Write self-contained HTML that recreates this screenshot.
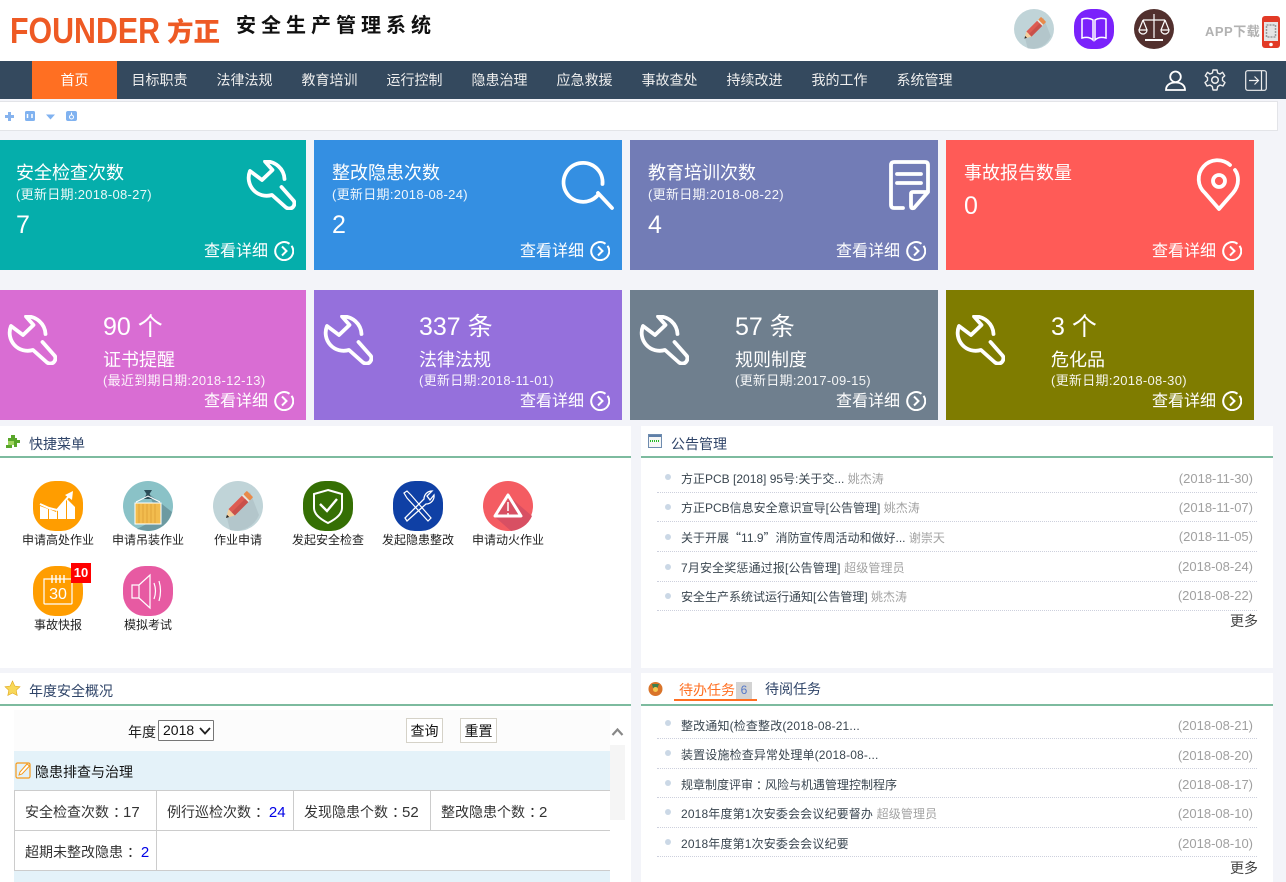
<!DOCTYPE html>
<html lang="zh-CN"><head><meta charset="utf-8"><title>安全生产管理系统</title>
<style>
*{box-sizing:border-box}
html,body{margin:0;padding:0}
body{width:1286px;height:882px;overflow:hidden;background:#f3f4f9;position:relative;font-family:"Liberation Sans","Noto Sans CJK SC",sans-serif;font-size:12px;color:#333}
.a{position:absolute;white-space:nowrap}
svg{position:absolute;display:block;overflow:visible}
.nav{position:absolute;top:61px;left:0;width:1286px;height:38px;background:#34495e}
.nav span{position:absolute;top:0;line-height:38px;font-size:14px;color:#eee;width:85px;text-align:center}
.card{position:absolute;height:130px;color:#fff;overflow:hidden}
.card .a{color:#fff}
.t{font-size:18px;line-height:24px;left:16px;top:21px}
.d{font-size:13px;line-height:16px;left:16px;top:47px;opacity:.92;letter-spacing:.3px}
.n{font-size:25px;line-height:30px;left:16px;top:70px}
.m{font-size:16px;line-height:20px;right:38px;top:102px}
.r2 .n{left:103px;top:22px;font-size:25px}
.r2 .t{left:103px;top:58px}
.r2 .d{left:103px;top:83px}
.ic{fill:none;stroke:#fff;stroke-width:3.8;stroke-linecap:round;stroke-linejoin:round}
.panel{position:absolute;background:#fff}
.ttl{position:absolute;left:0;right:0;top:0;height:32px;border-bottom:2px solid #7dbb9f}
.ttl b{position:absolute;font-weight:400;font-size:14px;color:#2f4468;line-height:20px;top:8px}
.row{position:absolute;left:16px;width:600px;height:1px;border-bottom:1px dotted #cdd0dd}
.li{position:absolute;left:40px;font-size:12px;line-height:16px;color:#3a4650;white-space:nowrap}
.li i{font-style:normal;color:#a3a3a3}
.dg{letter-spacing:.15px}
.dt{position:absolute;right:20px;font-size:13px;line-height:16px;color:#a0a0a0}
.dot{position:absolute;left:24px;width:6px;height:6px;border-radius:50%;background:#cbd8e6}
.more{position:absolute;right:15px;font-size:14px;line-height:18px;color:#444}
.q{position:absolute;width:90px;text-align:center;font-size:12px;line-height:16px;color:#222}
.cell{position:absolute;font-size:14px;line-height:20px;color:#333;white-space:nowrap}
.cell em{font-style:normal;color:#0000e6}
.cell u{text-decoration:none;position:relative;left:4px}
.li u{text-decoration:none;position:relative;left:3px}
.cell s{text-decoration:none;font-size:15px}
.btn{position:absolute;top:718px;width:37px;height:25px;border:1px solid #d5d2c8;background:#fff;font-size:14px;line-height:24px;text-align:center;color:#111}
</style></head><body>
<svg width="0" height="0" style="position:absolute">
<defs>
<symbol id="wr" viewBox="0 0 50 50"><path class="ic" d="M38.500 19A18.500 18.500 0 0 0 19 1.500L26.500 10 16 20 4 11A18 18 0 0 0 26 35L40 47.500Q44 50 47 47 50 43 47 40L35.500 27"/></symbol>
<symbol id="go" viewBox="0 0 20 20"><path d="M15.500 2.800A9 9 0 1 0 17.500 4.800" fill="none" stroke="#fff" stroke-width="2"/><path d="M8 5.500 12.500 10 8 14.500" fill="none" stroke="#fff" stroke-width="2"/></symbol>
<symbol id="pen" viewBox="0 0 50 50"><circle cx="25" cy="25" r="25" fill="#c0d4d8"/><path d="M14 37 37 11 46 34A25 25 0 0 1 17 49Z" fill="#b3c6cb"/><g transform="rotate(45 25 25)"><rect x="20.500" y="8" width="9" height="5" rx="1" fill="#e88a4a"/><rect x="20.500" y="13" width="9" height="2" fill="#e8e4dc"/><rect x="20.500" y="15" width="9" height="19" fill="#dd5c52"/><rect x="25" y="15" width="4.500" height="19" fill="#c9504a"/><path d="M20.500 34H29.500L25 42Z" fill="#f4cf9d"/><path d="M23.400 39H26.600L25 42Z" fill="#222"/></g></symbol>
</defs></svg>

<!-- header -->
<div class="a" style="left:0;top:0;width:1286px;height:61px;background:#fff"></div>
<svg style="left:0;top:0" width="240" height="61"><text x="10" y="43" font-family="Liberation Sans" font-weight="700" font-size="36" fill="#ee5a24" textLength="150" lengthAdjust="spacingAndGlyphs">FOUNDER</text><text x="167" y="41" font-family="Noto Sans CJK SC" font-weight="900" font-size="26" fill="#ee5a24" textLength="53" lengthAdjust="spacingAndGlyphs">方正</text></svg>
<div class="a" style="left:236px;top:12px;font-size:20px;line-height:28px;font-weight:700;letter-spacing:5px;color:#111">安全生产管理系统</div>
<svg style="left:1014px;top:9px" width="40" height="40"><use href="#pen" width="40" height="40"/></svg>
<svg style="left:1074px;top:9px" width="40" height="40" viewBox="0 0 40 40"><rect width="40" height="40" rx="17" fill="#7a22fb"/><path d="M19 11C16 9 11 9 8 10V29C12 28 16 28 19 31ZM21 11C24 9 29 9 32 10V29C28 28 24 28 21 31Z" fill="none" stroke="#fff" stroke-width="1.500"/></svg>
<svg style="left:1134px;top:9px" width="40" height="40" viewBox="0 0 40 40"><circle cx="20" cy="20" r="20" fill="#52302e"/><path d="M20 5V29M9 11H31M9 11 5 21M9 11 13 21M31 11 27 21M31 11 35 21M13 31H27" fill="none" stroke="#fff" stroke-width="1.200"/><path d="M5 21A4 4 0 0 0 13 21ZM27 21A4 4 0 0 0 35 21Z" fill="none" stroke="#fff" stroke-width="1.200"/><rect x="11" y="30" width="18" height="2" fill="#fff"/></svg>
<div class="a" style="left:1205px;top:23px;font-size:13px;line-height:18px;font-weight:700;letter-spacing:.5px;color:#b2b2b2">APP下载</div>
<svg style="left:1262px;top:16px" width="18" height="32" viewBox="0 0 18 32"><rect width="18" height="32" rx="3" fill="#e23a26"/><rect x="2" y="6" width="14" height="19" fill="#e4e4e4"/><rect x="4.500" y="9" width="9" height="12" fill="none" stroke="#999" stroke-width="1.500" stroke-dasharray="2 1"/><circle cx="9" cy="28.500" r="1.800" fill="#fff"/></svg>

<!-- nav -->
<div class="nav">
<span style="left:32px;background:#ff6f22;color:#fff">首页</span>
<span style="left:117px">目标职责</span><span style="left:202px">法律法规</span><span style="left:287px">教育培训</span><span style="left:372px">运行控制</span><span style="left:457px">隐患治理</span><span style="left:542px">应急救援</span><span style="left:627px">事故查处</span><span style="left:712px">持续改进</span><span style="left:797px">我的工作</span><span style="left:882px">系统管理</span>
<svg style="left:1165px;top:9px" width="21" height="21" viewBox="0 0 21 21"><circle cx="10.500" cy="6.800" r="5.300" fill="none" stroke="#fff" stroke-width="1.800"/><path d="M1 20C1 15 5 12.500 10.500 12.500S20 15 20 20Z" fill="none" stroke="#fff" stroke-width="1.800"/></svg>
<svg style="left:1204px;top:8px" width="22" height="22" viewBox="0 0 22 22"><path d="M9 1H13L13.600 4 16 5 18.500 3.300 20.700 6.800 18.500 8.700V11.500L21 13.500 19 17 16 16 13.700 17.500 13 21H9L8.300 17.500 6 16 3 17 1 13.500 3.500 11.500V8.700L1.300 6.800 3.500 3.300 6 5 8.400 4Z" fill="none" stroke="#eee" stroke-width="1.400" stroke-linejoin="round"/><circle cx="11" cy="11" r="3.300" fill="none" stroke="#eee" stroke-width="1.500"/></svg>
<svg style="left:1245px;top:9px" width="22" height="21" viewBox="0 0 22 21"><rect x=".7" y=".7" width="20.600" height="19.600" rx="2" fill="none" stroke="#eee" stroke-width="1.200"/><path d="M16.500 1V20M4 10.500H13M9.500 6.500 13.500 10.500 9.500 14.500" fill="none" stroke="#eee" stroke-width="1.200"/></svg>
</div>

<!-- toolbar -->
<div class="a" style="left:0;top:101px;width:1278px;height:30px;background:#fff;border:1px solid #e3e4e8;border-left:0"></div>
<svg style="left:4px;top:111px" width="72" height="12" viewBox="0 0 72 12"><path d="M4 1H7V4H10V7H7V10H4V7H1V4H4Z" fill="#86b3ee"/><rect x="21" y="0" width="10" height="10" rx="1.500" fill="#80b2f0"/><path d="M23.500 3V7M28 3V7" stroke="#fff" stroke-width="1.500"/><path d="M42 3.500H51L46.500 8.500Z" fill="#80b2f0"/><rect x="62" y="0" width="11" height="10" rx="2" fill="#80b2f0"/><circle cx="67.500" cy="6" r="2" fill="none" stroke="#fff"/><path d="M67.500 1.500V4" stroke="#fff"/></svg>

<!-- row 1 -->
<div class="card" style="left:0;top:140px;width:306px;background:#05aeab">
<div class="a t">安全检查次数</div><div class="a d">(更新日期:2018-08-27)</div><div class="a n">7</div><div class="a m">查看详细</div>
<svg style="left:246px;top:20px" width="50" height="50"><use href="#wr" width="50" height="50"/></svg>
<svg style="left:274px;top:101px" width="20" height="20"><use href="#go" width="20" height="20"/></svg></div>
<div class="card" style="left:314px;top:140px;width:308px;background:#348fe2">
<div class="a t" style="left:18px">整改隐患次数</div><div class="a d" style="left:18px">(更新日期:2018-08-24)</div><div class="a n" style="left:18px">2</div><div class="a m">查看详细</div>
<svg style="left:248px;top:20px" width="52" height="52" viewBox="0 0 52 52"><path class="ic" d="M35 36A19.500 19.500 0 1 1 40.500 24M36 33 50 48"/></svg>
<svg style="left:276px;top:101px" width="20" height="20"><use href="#go" width="20" height="20"/></svg></div>
<div class="card" style="left:630px;top:140px;width:308px;background:#727cb6">
<div class="a t" style="left:18px">教育培训次数</div><div class="a d" style="left:18px">(更新日期:2018-08-22)</div><div class="a n" style="left:18px">4</div><div class="a m">查看详细</div>
<svg style="left:259px;top:20px" width="41" height="50" viewBox="0 0 41 50"><path class="ic" d="M14 48H5Q2 48 2 45V5Q2 2 5 2H36Q39 2 39 5V32L25 48Q22 49 22 46V34Q22 32 24 32H37M8 14H32M8 23H32"/></svg>
<svg style="left:276px;top:101px" width="20" height="20"><use href="#go" width="20" height="20"/></svg></div>
<div class="card" style="left:946px;top:140px;width:308px;background:#ff5b57">
<div class="a t" style="left:18px">事故报告数量</div><div class="a n" style="left:18px;top:51px">0</div><div class="a m">查看详细</div>
<svg style="left:253px;top:20px" width="42" height="50" viewBox="0 0 42 50"><path class="ic" d="M31 5A18.500 18.500 0 1 0 6 33L20 49 34 33Q39 27 39 20 39 14 36 10"/><circle class="ic" cx="20" cy="21" r="6"/></svg>
<svg style="left:276px;top:101px" width="20" height="20"><use href="#go" width="20" height="20"/></svg></div>

<!-- row 2 -->
<div class="card r2" style="left:0;top:290px;width:306px;background:#d96dd3">
<div class="a n">90 个</div><div class="a t">证书提醒</div><div class="a d">(最近到期日期:2018-12-13)</div><div class="a m">查看详细</div>
<svg style="left:7px;top:25px" width="50" height="50"><use href="#wr" width="50" height="50"/></svg>
<svg style="left:274px;top:101px" width="20" height="20"><use href="#go" width="20" height="20"/></svg></div>
<div class="card r2" style="left:314px;top:290px;width:308px;background:#9570dc">
<div class="a n" style="left:105px">337 条</div><div class="a t" style="left:105px">法律法规</div><div class="a d" style="left:105px">(更新日期:2018-11-01)</div><div class="a m">查看详细</div>
<svg style="left:9px;top:25px" width="50" height="50"><use href="#wr" width="50" height="50"/></svg>
<svg style="left:276px;top:101px" width="20" height="20"><use href="#go" width="20" height="20"/></svg></div>
<div class="card r2" style="left:630px;top:290px;width:308px;background:#6f7f8e">
<div class="a n" style="left:105px">57 条</div><div class="a t" style="left:105px">规则制度</div><div class="a d" style="left:105px">(更新日期:2017-09-15)</div><div class="a m">查看详细</div>
<svg style="left:9px;top:25px" width="50" height="50"><use href="#wr" width="50" height="50"/></svg>
<svg style="left:276px;top:101px" width="20" height="20"><use href="#go" width="20" height="20"/></svg></div>
<div class="card r2" style="left:946px;top:290px;width:308px;background:#7f7c00">
<div class="a n" style="left:105px">3 个</div><div class="a t" style="left:105px">危化品</div><div class="a d" style="left:105px">(更新日期:2018-08-30)</div><div class="a m">查看详细</div>
<svg style="left:9px;top:25px" width="50" height="50"><use href="#wr" width="50" height="50"/></svg>
<svg style="left:276px;top:101px" width="20" height="20"><use href="#go" width="20" height="20"/></svg></div>

<!-- quick menu -->
<div class="panel" style="left:0;top:426px;width:631px;height:242px">
<div class="ttl"><b style="left:29px">快捷菜单</b></div>
<svg style="left:5px;top:8px" width="16" height="15" viewBox="0 0 16 15"><path d="M3 4H6V1H10V4H12V6H15V9H12V13H9V11H7V14H1V11H3Z" fill="#58a62a"/><path d="M3 7H9V11H3Z" fill="#9fd45e"/></svg>
</div>
<div class="q" style="left:13px;top:532px">申请高处作业</div><div class="q" style="left:103px;top:532px">申请吊装作业</div><div class="q" style="left:193px;top:532px">作业申请</div><div class="q" style="left:283px;top:532px">发起安全检查</div><div class="q" style="left:373px;top:532px">发起隐患整改</div><div class="q" style="left:463px;top:532px">申请动火作业</div><div class="q" style="left:13px;top:617px">事故快报</div><div class="q" style="left:103px;top:617px">模拟考试</div>

<svg style="left:33px;top:481px" width="50" height="50" viewBox="0 0 50 50"><rect width="50" height="50" rx="22" fill="#ff9d00"/><path d="M7 25 15 28V38H7ZM16 28 23 31 24 29V38H16ZM25 28 33 19V38H25ZM34 18 42 26V38H34Z" fill="#fff"/><path d="M7 23 16 27 24 29 36 15" fill="none" stroke="#fff" stroke-width="2"/><path d="M32 14 40 10 39 19Z" fill="#fff"/></svg>
<svg style="left:123px;top:481px" width="50" height="50" viewBox="0 0 50 50"><circle cx="25" cy="25" r="25" fill="#8ac2c7"/><path d="M14 48 37 36 25 12 49 31A25 25 0 0 1 25 50Z" fill="#6d9aa1"/><path d="M21 9H29L26.500 13 29 18H21L23.500 13Z" fill="#2c4d57"/><path d="M13 21 25 15 37 21" fill="none" stroke="#fff" stroke-width="1"/><rect x="12" y="22" width="26" height="21" fill="#f2bc4e" stroke="#fff" stroke-width="1"/><path d="M16 23V42M20 23V42M24 23V42M28 23V42M32 23V42" stroke="#e0a53a" stroke-width="1"/></svg>
<svg style="left:213px;top:481px" width="50" height="50"><use href="#pen" width="50" height="50"/></svg>
<svg style="left:303px;top:481px" width="50" height="50" viewBox="0 0 50 50"><rect width="50" height="50" rx="22" fill="#356f04"/><path d="M25 9 39 13V27C39 34 31 39 25 42 19 39 11 34 11 27V13Z" fill="none" stroke="#fff" stroke-width="2"/><path d="M17 23 24 30 34 18" fill="none" stroke="#fff" stroke-width="2.400"/></svg>
<svg style="left:393px;top:481px" width="50" height="50" viewBox="0 0 50 50"><rect width="50" height="50" rx="22" fill="#0f40a5"/><path d="M11 12 14 10 18 14 38 37 35 40 14 17Z" fill="none" stroke="#fff" stroke-width="1.200"/><path d="M12 37 31 18A8 8 0 0 1 39 10L34 15 37 19 41 14A8 8 0 0 1 33 23L14 40Z" fill="none" stroke="#fff" stroke-width="1.300"/></svg>
<svg style="left:483px;top:481px" width="50" height="50" viewBox="0 0 50 50"><circle cx="25" cy="25" r="25" fill="#f45c62"/><path d="M12 36 27 16 49 35A25 25 0 0 1 28 50Z" fill="#d84f63"/><path d="M25 14 38 35H12Z" fill="none" stroke="#fff" stroke-width="3" stroke-linejoin="round"/><path d="M25 21V30M25 32V34" stroke="#fff" stroke-width="1.500"/></svg>
<svg style="left:33px;top:566px" width="50" height="50" viewBox="0 0 50 50"><rect width="50" height="50" rx="22" fill="#ff9d00"/><path d="M11 13H39V37Q39 38 38 38H12Q11 38 11 37Z" fill="none" stroke="#fff" stroke-width="1.200"/><path d="M19 9V17M23 9V17M27 9V17M31 9V17" stroke="#fff" stroke-width="1.400"/><text x="25" y="33" text-anchor="middle" font-family="Liberation Sans" font-size="16" fill="#fff">30</text></svg>
<div class="a" style="left:71px;top:563px;width:20px;height:20px;background:#f00;color:#fff;font-weight:700;font-size:13px;line-height:20px;text-align:center">10</div>
<svg style="left:123px;top:566px" width="50" height="50" viewBox="0 0 50 50"><rect width="50" height="50" rx="22" fill="#e75aa2"/><path d="M9 19H16V32H9ZM16 19 27 9V42L16 32" fill="none" stroke="#fff" stroke-width="1.200"/><path d="M31 17Q34 25 31 33M36 15Q39 25 36 35" fill="none" stroke="#fff" stroke-width="1.200"/></svg>

<!-- notice -->
<div class="panel" style="left:641px;top:426px;width:632px;height:242px">
<div class="ttl"><b style="left:30px">公告管理</b></div>
<svg style="left:7px;top:8px" width="14" height="14" viewBox="0 0 14 14"><rect x=".5" y=".5" width="13" height="13" fill="#f6f6f6" stroke="#6f8caf"/><rect x="1" y="1" width="12" height="2" fill="#5e7fa8"/><path d="M2 7H12" stroke="#22bb22" stroke-width="2" stroke-dasharray="1 1"/></svg>
<div class="dot" style="top:48px"></div><div class="li" style="top:45px">方正PCB [2018] 95号:关于交... <i>姚杰涛</i></div><div class="dt" style="top:45px">(2018-11-30)</div><div class="row" style="top:66px"></div>
<div class="dot" style="top:78px"></div><div class="li" style="top:74px">方正PCB信息安全意识宣导[公告管理] <i>姚杰涛</i></div><div class="dt" style="top:74px">(2018-11-07)</div><div class="row" style="top:95px"></div>
<div class="dot" style="top:108px"></div><div class="li" style="top:104px">关于开展<span style="font-family:'Noto Sans CJK SC',sans-serif">“</span>11.9<span style="font-family:'Noto Sans CJK SC',sans-serif">”</span>消防宣传周活动和做好... <i>谢崇天</i></div><div class="dt" style="top:103px">(2018-11-05)</div><div class="row" style="top:125px"></div>
<div class="dot" style="top:138px"></div><div class="li dg" style="top:134px">7月安全奖惩通过报[公告管理] <i>超级管理员</i></div><div class="dt" style="top:133px">(2018-08-24)</div><div class="row" style="top:155px"></div>
<div class="dot" style="top:167px"></div><div class="li" style="top:163px">安全生产系统试运行通知[公告管理] <i>姚杰涛</i></div><div class="dt" style="top:162px">(2018-08-22)</div><div class="row" style="top:184px"></div>
<div class="more" style="top:186px">更多</div>
</div>

<!-- annual -->
<div class="panel" style="left:0;top:673px;width:631px;height:209px">
<div class="ttl" style="height:33px"><b style="left:29px;top:8px">年度安全概况</b></div>
<svg style="left:5px;top:8px" width="15" height="15" viewBox="0 0 15 15"><path d="M7.500 0 9.800 5 15 5.700 11.200 9.300 12.200 14.500 7.500 12 2.800 14.500 3.800 9.300 0 5.700 5.200 5Z" fill="#f8d85a" stroke="#e0a618" stroke-width=".6"/></svg>
</div>
<div class="a" style="left:14px;top:710px;width:596px;height:41px;background:#fcfcfc"></div>
<div class="a" style="left:128px;top:723px;font-size:14px;line-height:18px;color:#222">年度</div>
<div class="a" style="left:158px;top:720px;width:56px;height:21px;border:1px solid #767676;border-radius:1px;background:#fff;font-size:14px;line-height:19px;padding-left:4px;color:#111">2018</div>
<svg style="left:199px;top:727px" width="12" height="8" viewBox="0 0 12 8"><path d="M1 1 6 6.500 11 1" fill="none" stroke="#222" stroke-width="1.800"/></svg>
<div class="btn" style="left:406px">查询</div><div class="btn" style="left:460px">重置</div>
<div class="a" style="left:14px;top:751px;width:596px;height:39px;background:#e4f2f9"></div>
<svg style="left:15px;top:762px" width="17" height="17" viewBox="0 0 17 17"><rect x="1" y="1" width="14" height="15" rx="1.500" fill="none" stroke="#f59a1a" stroke-width="1.200"/><path d="M4 13 5 10 12 2 14.500 4 7 12Z" fill="#fff" stroke="#f59a1a"/></svg>
<div class="a" style="left:35px;top:762px;font-size:14px;line-height:20px;color:#111">隐患排查与治理</div>
<div class="a" style="left:14px;top:790px;width:596px;height:81px;border:1px solid #ccc;border-width:1px 0 1px 1px;background:#fff"></div>
<div class="a" style="left:14px;top:830px;width:596px;height:1px;background:#ccc"></div>
<div class="a" style="left:156px;top:790px;width:1px;height:81px;background:#ccc"></div>
<div class="a" style="left:293px;top:790px;width:1px;height:41px;background:#ccc"></div>
<div class="a" style="left:430px;top:790px;width:1px;height:41px;background:#ccc"></div>
<div class="cell" style="left:25px;top:802px">安全检查次数<u>：</u><s>17</s></div>
<div class="cell" style="left:167px;top:802px">例行巡检次数<u>：</u> <em><s>24</s></em></div>
<div class="cell" style="left:304px;top:802px">发现隐患个数<u>：</u><s>52</s></div>
<div class="cell" style="left:441px;top:802px">整改隐患个数<u>：</u><s>2</s></div>
<div class="cell" style="left:25px;top:842px">超期未整改隐患<u>：</u> <em><s>2</s></em></div>
<div class="a" style="left:14px;top:871px;width:596px;height:11px;background:#e4f2f9"></div>
<div class="a" style="left:610px;top:745px;width:15px;height:75px;background:#f5f5f5"></div>
<svg style="left:611px;top:727px" width="13" height="10" viewBox="0 0 13 10"><path d="M1.500 8 6.500 2.500 11.500 8" fill="none" stroke="#888" stroke-width="2.200"/></svg>

<!-- tasks -->
<div class="panel" style="left:641px;top:673px;width:632px;height:209px">
<div class="ttl" style="height:33px"><b style="left:38px;top:7px;color:#ff6f22">待办任务</b><b style="left:95px;top:9px;width:16px;height:17px;background:#d3d3d3;color:#5578c8;font-size:12px;text-align:center;line-height:17px">6</b><b style="left:124px;top:6px">待阅任务</b></div>
<div class="a" style="left:33px;top:26px;width:83px;height:2px;background:#ff6f22"></div>
<svg style="left:7px;top:9px" width="15" height="14" viewBox="0 0 15 14"><circle cx="7.500" cy="7" r="7" fill="#d9742a"/><path d="M4 2H11L9 7 5 6Z" fill="#3c7f4e"/><circle cx="7.500" cy="7.500" r="2.500" fill="#f4c64f"/></svg>
<div class="dot" style="top:47px"></div><div class="li dg" style="top:45px">整改通知(检查整改(2018-08-21...</div><div class="dt" style="top:45px">(2018-08-21)</div><div class="row" style="top:65px"></div>
<div class="dot" style="top:77px"></div><div class="li dg" style="top:74px">装置设施检查异常处理单(2018-08-...</div><div class="dt" style="top:75px">(2018-08-20)</div><div class="row" style="top:95px"></div>
<div class="dot" style="top:107px"></div><div class="li" style="top:104px">规章制度评审<u>：</u>风险与机遇管理控制程序</div><div class="dt" style="top:104px">(2018-08-17)</div><div class="row" style="top:124px"></div>
<div class="dot" style="top:136px"></div><div class="li dg" style="top:133px">2018年度第1次安委会会议纪要督办 <i>超级管理员</i></div><div class="dt" style="top:133px">(2018-08-10)</div><div class="row" style="top:154px"></div>
<div class="dot" style="top:166px"></div><div class="li dg" style="top:163px">2018年度第1次安委会会议纪要</div><div class="dt" style="top:163px">(2018-08-10)</div><div class="row" style="top:183px"></div>
<div class="more" style="top:186px">更多</div>
</div>
</body></html>
